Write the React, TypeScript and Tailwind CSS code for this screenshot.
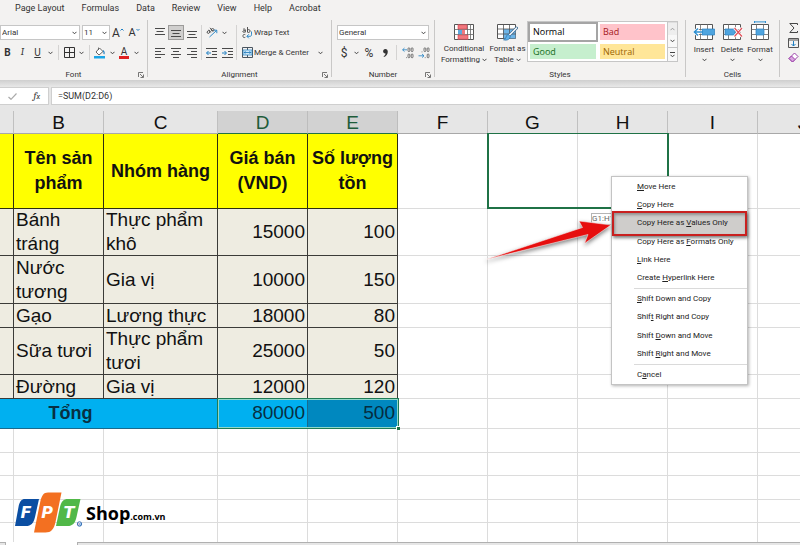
import type { ReactNode } from "react";
import clsx from "clsx";

const tabs = ["Page Layout", "Formulas", "Data", "Review", "View", "Help", "Acrobat"];

const letters = ["", "B", "C", "D", "E", "F", "G", "H", "I", "J"];

const products = [
  { name: "Bánh tráng", group: "Thực phẩm khô", price: 15000, qty: 100, height: "h-[47px]" },
  { name: "Nước tương", group: "Gia vị", price: 10000, qty: 150, height: "h-12" },
  { name: "Gạo", group: "Lương thực", price: 18000, qty: 80, height: "h-6" },
  { name: "Sữa tươi", group: "Thực phẩm tươi", price: 25000, qty: 50, height: "h-[47px]" },
  { name: "Đường", group: "Gia vị", price: 12000, qty: 120, height: "h-6" },
];

// text before the access key, the key itself, text after it
const menuGroups: [string, string, string][][] = [
  [
    ["", "M", "ove Here"],
    ["", "C", "opy Here"],
    ["Copy Here as ", "V", "alues Only"],
    ["Copy Here as ", "F", "ormats Only"],
    ["", "L", "ink Here"],
    ["Create ", "H", "yperlink Here"],
  ],
  [
    ["", "S", "hift Down and Copy"],
    ["Shif", "t", " Right and Copy"],
    ["Shift ", "D", "own and Move"],
    ["Shift ", "R", "ight and Move"],
  ],
  [["C", "a", "ncel"]],
];

function Caret() {
  return (
    <svg width="5" height="4" viewBox="0 0 5 4" className="shrink-0" fill="none" stroke="#444" strokeWidth="1">
      <path d="M.5 .8 2.5 2.8 4.5 .8" />
    </svg>
  );
}

function Tool({ label, className = "w-4", children }: { label: string; className?: string; children: ReactNode }) {
  return (
    <button aria-label={label} className={clsx("flex h-[15px] shrink-0 items-center justify-center", className)}>
      {children}
    </button>
  );
}

function CaretTool({ label }: { label: string }) {
  return (
    <Tool label={label} className="w-2.5">
      <Caret />
    </Tool>
  );
}

function Sep() {
  return <div className="mx-[3px] h-[15px] w-px shrink-0 bg-[#d4d3d2]" />;
}

function Pick({ label, value, className }: { label: string; value: string; className: string }) {
  return (
    <label className={clsx("grid h-[15px] shrink-0 items-center border border-[#c6c6c6] bg-white", className)}>
      <select aria-label={label} className="col-start-1 row-start-1 h-[13px] w-full appearance-none pl-px text-[8px] leading-[13px] outline-none">
        <option>{value}</option>
      </select>
      <span className="pointer-events-none col-start-1 row-start-1 mr-0.5 justify-self-end">
        <Caret />
      </span>
    </label>
  );
}

function Group({ title, width, launcher, children }: { title: string; width: string; launcher?: boolean; children: ReactNode }) {
  return (
    <>
      <section className={clsx("flex h-[60px] shrink-0 flex-col justify-between", width)}>
        {children}
        <div className="grid h-2.5 grid-cols-[12px_1fr_12px] items-center text-center text-[8px] leading-[10px]">
          <span className="col-start-2">{title}</span>
          {launcher && (
            <button aria-label={title + " settings"} className="flex justify-center">
              <svg width="6" height="6" viewBox="0 0 6 6" fill="none" stroke="#555" strokeWidth=".8">
                <path d="M.5 5V.5H5M2 2l3 3M5.5 2.5v3h-3" />
              </svg>
            </button>
          )}
        </div>
      </section>
      <div className="h-[57px] w-px shrink-0 bg-[#c9c8c7]" />
    </>
  );
}

function Lines({ d }: { d: string }) {
  return (
    <svg width="10" height="10" viewBox="0 0 10 10" fill="none" stroke="#4a4a4a" strokeWidth="1">
      <path d={d} />
    </svg>
  );
}

function IndentIcon({ right }: { right?: boolean }) {
  return (
    <svg width="11" height="10" viewBox="0 0 11 10" fill="none" stroke="#4a4a4a">
      <path d="M0 .5h11M6 3.5h5M6 6.5h5M0 9.5h11" />
      <path d={right ? "M0 5h4M2.5 3 4.5 5 2.5 7" : "M.7 5H5M2.5 3 .5 5l2 2"} stroke="#1e7fc2" />
    </svg>
  );
}

function DecimalIcon({ less }: { less?: boolean }) {
  return (
    <svg width="12" height="12" viewBox="0 0 12 12" fill="none" stroke="#555" strokeWidth=".8">
      <rect x="6" y=".8" width="1.8" height="3.8" rx=".9" />
      <rect x="9.2" y=".8" width="1.8" height="3.8" rx=".9" />
      <rect x="9.2" y="7" width="1.8" height="3.8" rx=".9" />
      {!less && <rect x="6" y="7" width="1.8" height="3.8" rx=".9" />}
      <path d={less ? "M4 4.5v.8M7.2 10.3v.8" : "M4.5 10.3v.8"} />
      <path d={less ? "M.5 8.8H6M4 7 6 8.8 4 10.6" : "M5 2.8H.7M2.5 1 .6 2.8l1.9 1.8"} stroke="#1e7fc2" />
    </svg>
  );
}

function WrapIcon() {
  return (
    <svg width="11" height="12" viewBox="0 0 11 12" fill="none" stroke="#444" strokeWidth=".9">
      <path d="M1 2.3c1-.6 2.3-.4 2.3.7V5.4M3.3 3.6C1.8 3.4.7 3.9.8 4.6.9 5.5 2.7 5.5 3.3 4.5M5.5 0v5.4M5.5 3.2c.7-1 2.6-.8 2.6.8s-1.9 1.9-2.6.9M3.3 7.7C2 7.1.8 7.9.8 9s1.2 2 2.5 1.3" />
      <path d="M9.5 4.5v3.3c0 1-.6 1.5-1.5 1.5H5M6.8 7.3 4.9 9.3l1.9 2" stroke="#1e7fc2" />
    </svg>
  );
}

function MergeIcon() {
  return (
    <svg width="11" height="11" viewBox="0 0 11 11" fill="none" stroke="#4a5560">
      <path d="M.5 .5h10v10H.5zM5.5 0v3M5.5 8v3" />
      <path d="M1 3h9v5H1z" fill="#cfe8f8" stroke="#1e7fc2" strokeWidth=".7" />
      <path d="M2 5.5h7M3.5 4.2 2.2 5.5l1.3 1.3M7.5 4.2 8.8 5.5 7.5 6.8" stroke="#1673b8" strokeWidth=".8" />
    </svg>
  );
}

function ConditionalIcon() {
  return (
    <svg width="20" height="16" viewBox="0 0 20 16" fill="none">
      <path d="M.5 .5h19v15H.5z" fill="#fff" stroke="#555" />
      <path d="M4.5 0v16M13.5 0v16M16.5 0v16M0 5.5h20M0 10.5h20" stroke="#666" strokeWidth=".8" />
      <path d="M4 .8h9V5H4zM4 11h10v4.2H4z" fill="#f1777d" stroke="#d64550" strokeWidth=".6" />
      <path d="M4 6h4v4.2H4z" fill="#5fa8dc" />
      <path d="M8 6h3v4.2H8z" fill="#f1777d" />
    </svg>
  );
}

function FormatTableIcon() {
  return (
    <svg width="21" height="17" viewBox="0 0 21 17" fill="none">
      <path d="M.5 .5h18v14H.5z" fill="#fff" stroke="#555" />
      <path d="M6 5h12.5v9.5H6z" fill="#6db5e8" />
      <path d="M6.5 0v15M12.5 0v15M0 5h19M0 10h19" stroke="#555" strokeWidth=".8" />
      <path d="M19.5 4 11.5 12" stroke="#3f6f98" strokeWidth="3" strokeLinecap="round" />
      <path d="M19.5 4 12.5 11" stroke="#fff" strokeWidth="1.4" strokeLinecap="round" />
      <path d="M11.5 10.5c-2 0-2 2-2.8 3.5-.4.9-1.4 1.5-2.2 1.8 2.8.9 6.5 0 6.7-3.3z" fill="#5fb0e8" stroke="#2d74aa" strokeWidth=".7" />
    </svg>
  );
}

function CellsIcon({ kind }: { kind: "Insert" | "Delete" | "Format" }) {
  return (
    <svg width="22" height="20" viewBox="0 0 22 20" fill="none">
      <path d="M2.5 3.5h17v15h-17z" fill="#fff" stroke="#555" />
      <path d="M7.5 3v16M14.5 3v16M2 8.5h18M2 13.5h18" stroke="#666" strokeWidth=".8" />
      {kind === "Insert" && (
        <>
          <path d="M9 8h12.5v6H9z" fill="#4fa5df" stroke="#2b7fbd" strokeWidth=".7" />
          <path d="M9 11H1.5M5 7.5 1.3 11 5 14.5" stroke="#fff" strokeWidth="3" />
          <path d="M10 11H1.5M5 7.5 1.3 11 5 14.5" stroke="#2e8fd0" strokeWidth="1.4" />
        </>
      )}
      {kind === "Delete" && (
        <>
          <path d="M4 8h10v6H4z" fill="#4fa5df" stroke="#2b7fbd" strokeWidth=".7" />
          <path d="M13.5 7 21 15.5M21 7l-7.5 8.5" stroke="#fff" strokeWidth="3" />
          <path d="M13.5 7 21 15.5M21 7l-7.5 8.5" stroke="#e3505a" strokeWidth="1.2" />
        </>
      )}
      {kind === "Format" && (
        <>
          <path d="M7 8h8v6H7z" fill="#4fa5df" stroke="#2b7fbd" strokeWidth=".7" />
          <path d="M5.5 .9h11M5.5 0v2M16.5 0v2" stroke="#2e8fd0" />
        </>
      )}
    </svg>
  );
}

function Ribbon() {
  return (
    <header className="h-20 overflow-hidden bg-[#f3f2f1] text-[#333]">
      <nav className="flex h-5 gap-[17px] pt-px pl-[15px] text-[9px] leading-[15px]">
        {tabs.map((t) => (
          <button key={t} className="h-[15px] shrink-0">
            {t}
          </button>
        ))}
      </nav>

      <div className="flex">
        <Group title="Font" width="w-[147px]" launcher>
          <div className="flex flex-col gap-[5px] pt-[5px]">
            <div className="flex">
              <Pick label="Font" value="Arial" className="w-20" />
              <Pick label="Font size" value="11" className="ml-0.5 w-7" />
              <Tool label="Increase font size">
                <span className="text-[12px] leading-none">A</span>
                <svg width="4" height="9" viewBox="0 0 4 9" fill="none" stroke="#1e7fc2">
                  <path d="M.5 2.5 2 1l1.5 1.5" />
                </svg>
              </Tool>
              <Tool label="Decrease font size">
                <span className="text-[11px] leading-none">A</span>
                <svg width="4" height="9" viewBox="0 0 4 9" fill="none" stroke="#1e7fc2">
                  <path d="M.5 1 2 2.5 3.5 1" />
                </svg>
              </Tool>
            </div>
            <div className="flex text-[10px]">
              <Tool label="Bold" className="w-[15px]">
                <b>B</b>
              </Tool>
              <Tool label="Italic" className="w-[15px]">
                <i className="font-serif">I</i>
              </Tool>
              <Tool label="Underline" className="w-[15px]">
                <u>U</u>
              </Tool>
              <CaretTool label="Underline style" />
              <Sep />
              <Tool label="Borders" className="w-3.5">
                <svg width="11" height="11" viewBox="0 0 11 11" fill="none" stroke="#333">
                  <path d="M.5 .5h10v10H.5zM5.5 0v11M0 5.5h11" />
                </svg>
              </Tool>
              <CaretTool label="Border style" />
              <Sep />
              <Tool label="Fill colour" className="w-3.5">
                <svg width="12" height="12" viewBox="0 0 12 12" fill="none">
                  <path d="M0 9h11v2.5H0z" fill="#1aa5e6" />
                  <path d="M5.5 1 9 4.5 5 8 2 5z" fill="#fff" stroke="#555" strokeWidth=".9" />
                  <path d="M4.5 3V.5" stroke="#555" strokeWidth=".8" />
                  <path d="M9 3.5c1 .8 1.5 2 1 3.7" stroke="#1e7fc2" strokeWidth="1.2" />
                </svg>
              </Tool>
              <CaretTool label="More fill colours" />
              <Tool label="Font colour" className="w-3.5">
                <span className="border-b-3 border-[#e02020] px-0.5 leading-[9px]">A</span>
              </Tool>
              <CaretTool label="More font colours" />
            </div>
          </div>
        </Group>

        <Group title="Alignment" width="w-[183px]" launcher>
          <div className="flex pt-[5px] pl-1">
            <div className="grid grid-cols-3 gap-y-[5px]">
              <Tool label="Top align">
                <Lines d="M0 .5h10M1.5 3.5h7M0 6.5h10" />
              </Tool>
              <Tool label="Middle align" className="w-4 border border-[#9c9b9a] bg-[#d0cfce]">
                <Lines d="M0 2.5h10M1.5 5.5h7M0 8.5h10" />
              </Tool>
              <Tool label="Bottom align">
                <Lines d="M0 3.5h10M1.5 6.5h7M0 9.5h10" />
              </Tool>
              <Tool label="Align left">
                <Lines d="M0 .5h10M0 3.5h6M0 6.5h10M0 9.5h6" />
              </Tool>
              <Tool label="Center">
                <Lines d="M0 .5h10M2 3.5h6M0 6.5h10M2 9.5h6" />
              </Tool>
              <Tool label="Align right">
                <Lines d="M0 .5h10M4 3.5h6M0 6.5h10M4 9.5h6" />
              </Tool>
            </div>
            <div className="mx-px w-px bg-[#d4d3d2]" />
            <div className="grid grid-cols-2 gap-y-[5px]">
              <Tool label="Orientation" className="col-span-2 w-[26px] gap-1">
                <svg width="12" height="11" viewBox="0 0 12 11" fill="none" stroke="#444" strokeWidth=".9">
                  <ellipse cx="2.5" cy="5" rx="1.5" ry="1.2" transform="rotate(-45 2.5 5)" />
                  <path d="M2.8 2.8 4.8 5.5M4 .8l3 3.5" />
                  <ellipse cx="6.6" cy="2.8" rx="1.4" ry="1.2" />
                  <path d="M3.5 10 10.5 3.5M7.8 3.2h3v3" stroke="#1e7fc2" />
                </svg>
                <Caret />
              </Tool>
              <Tool label="Decrease indent">
                <IndentIcon />
              </Tool>
              <Tool label="Increase indent">
                <IndentIcon right />
              </Tool>
            </div>
            <div className="mx-px w-px bg-[#d4d3d2]" />
            <div className="grid gap-y-[5px] pl-1 text-[8px]">
              <button className="flex h-[15px] items-center gap-px">
                <WrapIcon /> Wrap Text
              </button>
              <button className="flex h-[15px] items-center gap-px whitespace-nowrap">
                <MergeIcon /> Merge &amp; Center
                <span className="ml-2">
                  <Caret />
                </span>
              </button>
            </div>
          </div>
        </Group>

        <Group title="Number" width="w-[102px]" launcher>
          <div className="flex flex-col gap-[5px] pt-[5px] pl-[5px]">
            <Pick label="Number format" value="General" className="w-[92px]" />
            <div className="flex text-[12px]">
              <Tool label="Currency" className="w-3.5">$</Tool>
              <CaretTool label="More currencies" />
              <Tool label="Percent">%</Tool>
              <Tool label="Comma style">
                <svg width="5" height="8" viewBox="0 0 5 8" fill="#333">
                  <path d="M2.3 0C3.9 0 4.8 1.2 4.8 2.8 4.8 5.3 3.2 7.2 1 8L.6 7.3C1.8 6.7 2.5 5.7 2.6 4.5 1.2 4.7.1 3.7.1 2.3.1 1 1 0 2.3 0z" />
                </svg>
              </Tool>
              <Sep />
              <Tool label="Increase decimal">
                <DecimalIcon />
              </Tool>
              <Tool label="Decrease decimal">
                <DecimalIcon less />
              </Tool>
            </div>
          </div>
        </Group>

        <Group title="Styles" width="w-[250px]">
          <div className="flex pl-[5px]">
            <button className="flex w-12 flex-col items-center pt-1 text-[8px] leading-[11px]">
              <ConditionalIcon />
              <span className="mt-[3px]">Conditional</span>
              <span className="flex items-center gap-0.5">
                Formatting <Caret />
              </span>
            </button>
            <button className="flex w-[39px] flex-col items-center pt-1 text-[8px] leading-[11px] whitespace-nowrap">
              <FormatTableIcon />
              <span className="mt-0.5">Format as</span>
              <span className="flex items-center gap-0.5">
                Table <Caret />
              </span>
            </button>
            <div className="mt-px flex h-[41px] border border-[#c6c6c6] bg-white font-['Open_Sans','Noto_Sans',sans-serif] text-[9px] leading-none">
              <div className="grid grid-cols-[70px_69px] grid-rows-2 text-left">
                <button className="border-2 border-[#a5a5a5] pl-[3px] text-left text-black">Normal</button>
                <button className="m-0.5 bg-[#ffc3ca] pl-[3px] text-left text-[#a3161c]">Bad</button>
                <button className="m-0.5 bg-[#c6efce] pl-[3px] text-left text-[#156b1a]">Good</button>
                <button className="m-0.5 bg-[#ffe699] pl-[3px] text-left text-[#9c6500]">Neutral</button>
              </div>
              <div className="grid w-2.5 grid-rows-3 divide-y divide-[#c6c6c6] border-l border-[#c6c6c6] bg-[#f8f8f8]">
                <button aria-label="Scroll up" className="flex rotate-180 items-center justify-center bg-[#e6e6e6] opacity-50">
                  <Caret />
                </button>
                <button aria-label="Scroll down" className="flex items-center justify-center">
                  <Caret />
                </button>
                <button aria-label="All styles" className="flex flex-col items-center justify-center gap-px">
                  <span className="h-px w-[5px] bg-[#444]" />
                  <Caret />
                </button>
              </div>
            </div>
          </div>
        </Group>

        <Group title="Cells" width="w-[93px]">
          <div className="flex pt-px pl-1">
            {(["Insert", "Delete", "Format"] as const).map((kind) => (
              <button key={kind} className="flex w-7 flex-col items-center text-[8px] leading-[11px]">
                <CellsIcon kind={kind} />
                <span className="mt-[3px] mb-[3px]">{kind}</span>
                <Caret />
              </button>
            ))}
          </div>
        </Group>

        <div className="flex flex-col pl-[7px]">
          <Tool label="AutoSum" className="w-3">
            <svg width="9" height="10" viewBox="0 0 9 10" fill="none" stroke="#444">
              <path d="M8.5 2V.5H.8L5 5 .8 9.5h7.7V8" />
            </svg>
          </Tool>
          <Tool label="Fill" className="w-3">
            <svg width="11" height="10" viewBox="0 0 11 10" fill="none" stroke="#555">
              <path d="M.5 .5h10v9H.5zM.5 2h10" />
              <path d="M5.5 3v5M3.5 6l2 2 2-2" stroke="#1e7fc2" />
            </svg>
          </Tool>
          <Tool label="Clear" className="w-3">
            <svg width="11" height="11" viewBox="0 0 11 11" fill="#fff" stroke="#9b3fa8">
              <path d="M6.5 1 10 4.5 4.5 10 1 6.5z" />
              <path d="M1 6.5 3.5 4l3.5 3.5L4.5 10z" fill="#d9a5e0" />
            </svg>
          </Tool>
        </div>
      </div>
    </header>
  );
}

function FormulaBar() {
  return (
    <div className="flex bg-[#e6e6e6] bg-linear-to-b from-[#cfcfcf] to-[#e6e6e6] to-20% pt-[7px] pb-1.5">
      <div className="flex h-[18px] w-[49px] shrink-0 items-center justify-between border-y border-r border-[#cfcfcf] bg-white pr-2 pl-2">
        <button aria-label="Enter">
          <svg width="9" height="7" viewBox="0 0 9 7" fill="none" stroke="#aaa" strokeWidth="1.2">
            <path d="M.5 4 3 6.3 8.5 .5" />
          </svg>
        </button>
        <button aria-label="Insert function" className="font-serif text-[10px] leading-none text-[#333] italic">
          f<span className="text-[8px]">x</span>
        </button>
      </div>
      <input
        aria-label="Formula"
        defaultValue="=SUM(D2:D6)"
        className="ml-0.5 h-[18px] min-w-0 flex-1 border-y border-l border-[#cfcfcf] bg-white pl-1.5 text-[9px] text-[#333] outline-none"
      />
    </div>
  );
}

function Blank({ from }: { from: number }) {
  return (
    <>
      {letters.slice(from).map((l) => (
        <td key={l} className="border-r border-b border-[#dcdcdc]" />
      ))}
    </>
  );
}

function Sheet() {
  const head = "border-r border-b border-[#2e2e10] bg-[#ffff00] px-0.5 text-[18px] leading-[25px] font-bold";
  const cell = "border-r border-b border-[#3b3b38] bg-[#eeece1] px-0.5 leading-6";

  return (
    <table className="-ml-[76px] w-[calc(100%+124px)] table-fixed border-separate border-spacing-0 font-['Liberation_Sans',Arial,sans-serif] text-[19px] text-[#111]">
      <colgroup>
        {letters.map((l) => (
          <col key={l} className={clsx(l === "C" ? "w-[114px]" : l !== "J" && "w-[90px]")} />
        ))}
      </colgroup>
      <thead>
        <tr className="h-[23px]">
          {letters.map((l) => (
            <th
              key={l}
              scope="col"
              className={clsx(
                "border-r border-b p-0 pt-0.5 leading-5 font-normal",
                l === "D" || l === "E"
                  ? "border-r-[#bdbdbd] border-b-[#1f7246] bg-[#d2d2d2] text-[#1e5c3a]"
                  : "border-r-[#c0c0c0] border-b-[#a8a8a8] bg-[#e6e6e6]"
              )}
            >
              {l}
            </th>
          ))}
        </tr>
      </thead>
      <tbody>
        <tr className="h-[75px]">
          <td className={head} />
          <td className={clsx(head, "text-center")}>Tên sản phẩm</td>
          <td className={clsx(head, "text-center")}>Nhóm hàng</td>
          <td className={clsx(head, "text-center")}>Giá bán (VND)</td>
          <td className={clsx(head, "text-center")}>Số lượng tồn</td>
          <td className="border-r border-b border-[#dcdcdc]" />
          <td className="relative border-r border-b border-[#dcdcdc]">
            {/* drop target G1:H1 */}
            <div className="absolute -top-px -bottom-px -left-px w-[182px] border-2 border-t border-[#1f7246]" />
          </td>
          <Blank from={7} />
        </tr>
        {products.map((p) => (
          <tr key={p.name} className={p.height}>
            <td className={cell} />
            <td className={cell}>
              <div className="-my-1">{p.name}</div>
            </td>
            <td className={cell}>
              <div className="-my-1">{p.group}</div>
            </td>
            <td className={clsx(cell, "text-right")}>
              <div className="-my-1">{p.price}</div>
            </td>
            <td className={clsx(cell, "text-right")}>
              <div className="-my-1">{p.qty}</div>
            </td>
            <Blank from={5} />
          </tr>
        ))}
        <tr className="h-[30px]">
          <td colSpan={3} className="border-r border-b border-[#1a6a8c] bg-[#00b0f0] p-0 pb-0.5 text-center text-[18px] leading-6 font-bold text-[#082f42]">
            Tổng
          </td>
          <td className="relative border-r border-b border-[#1a6a8c] bg-[#00b0f0] px-0.5 pt-0 pb-0.5 text-right leading-6 text-[#082f42]">
            80000
            {/* current selection D7:E7 */}
            <div className="absolute -top-px -bottom-px -left-px z-10 w-[182px] border border-[#1f7a55] ring-1 ring-[#8fd8c8] ring-inset">
              <div className="absolute -right-0.5 -bottom-0.5 size-1 border-t border-l border-white bg-[#1f7246]" />
            </div>
          </td>
          <td className="border-r border-b border-[#1a6a8c] bg-[#0088bf] px-0.5 pt-0 pb-0.5 text-right leading-6 text-[#062c40]">500</td>
          <Blank from={5} />
        </tr>
        {Array.from({ length: 40 }, (_, i) => (
          <tr key={i} className={i % 2 ? "h-[23px]" : "h-6"}>
            <Blank from={0} />
          </tr>
        ))}
      </tbody>
    </table>
  );
}

function DropMenu() {
  return (
    <div
      role="menu"
      className="absolute top-[65px] left-[611px] flex h-[209px] w-[137px] flex-col border border-[#c4c4c4] bg-white pt-px text-[8px] text-[#222] shadow-[1px_1px_3px_rgba(0,0,0,0.3)]"
    >
      {menuGroups.map((items, g) => (
        <div key={g} className="contents">
          {g > 0 && <div className="my-px ml-[22px] h-px bg-[#dadada]" />}
          {items.map(([before, key, after]) => (
            <button key={before + key} role="menuitem" className="relative flex-1 pl-[25px] text-left leading-none whitespace-nowrap">
              {key === "V" && (
                <span className="absolute inset-x-0 -inset-y-[3px] border-2 border-[#c9201f] bg-[#cfcdcb] shadow-[1px_2px_3px_rgba(0,0,0,0.5),inset_1px_2px_3px_rgba(0,0,0,0.3)]" />
              )}
              <span className="relative">
                {before}
                <u>{key}</u>
                {after}
              </span>
            </button>
          ))}
        </div>
      ))}
    </div>
  );
}

function Arrow() {
  return (
    <svg
      width="132"
      height="48"
      viewBox="482 216 132 48"
      className="absolute top-[105px] left-[482px] drop-shadow-[0_2px_2px_rgba(0,0,0,0.5)]"
    >
      <path d="M486 259.5 582.5 227.5 579 221 611 225 584.5 243.5 588 234.5z" fill="#e60f0f" stroke="#fff" strokeWidth=".5" strokeLinejoin="round" />
    </svg>
  );
}

function Logo() {
  return (
    <a href="#" className="absolute top-[380px] left-[14px] flex items-center text-black">
      <svg width="70" height="43" viewBox="0 0 70 43">
        <path d="M11 8h14l-4 18c-1.5 6.500-4 9-9 9H1L4.500 16c1-5.500 3-8 6.500-8z" fill="#0b4ea2" />
        <path d="M34 1.500h13.500L41.500 31c-1.500 7.500-4.500 10.500-10 10.500H20L26 12c1.500-7.500 3.500-10.500 8-10.500z" fill="#f37021" />
        <path d="M54 8h12.500l-4 18c-1.500 6.500-4 9-9 9H42l4-19c1.200-5.500 3.500-8 8-8z" fill="#51b848" />
        <g fill="#fff" fontFamily="'DejaVu Sans', sans-serif" fontWeight="700" fontStyle="italic" fontSize="16" textAnchor="middle">
          <text x="12" y="27">F</text>
          <text x="33" y="27">P</text>
          <text x="55" y="27">T</text>
        </g>
        <circle cx="65.5" cy="33" r="2.2" fill="#fff" stroke="#0b4ea2" strokeWidth=".8" />
        <text x="65.5" y="34.5" fill="#0b4ea2" fontSize="4" textAnchor="middle" fontFamily="Inter, sans-serif">
          R
        </text>
      </svg>
      <span className="ml-0.5 font-['Open_Sans','Noto_Sans',sans-serif] text-[18px] leading-none font-bold">
        Shop<span className="text-[9px]">.com.vn</span>
      </span>
    </a>
  );
}

export default function App() {
  return (
    <div className="flex h-screen flex-col overflow-hidden bg-white font-[Roboto,'Open_Sans',sans-serif]">
      <Ribbon />
      <FormulaBar />
      <main className="relative min-h-0 flex-1 overflow-hidden">
        <Sheet />
        <div className="absolute top-[102px] left-[591px] border border-[#b5b5b5] bg-white text-[8px] leading-[10px] text-[#666]">
          G1:H1
        </div>
        <DropMenu />
        <Arrow />
        <Logo />
      </main>
      <footer className="flex h-[3px] shrink-0">
        <div className="w-1.5 border-t border-r border-[#b0b0b0] bg-[#e6e6e6]" />
        <div className="w-[71px] bg-white" />
        <div className="flex-1 border-t border-l border-[#b0b0b0] bg-[#e6e6e6]" />
      </footer>
    </div>
  );
}
